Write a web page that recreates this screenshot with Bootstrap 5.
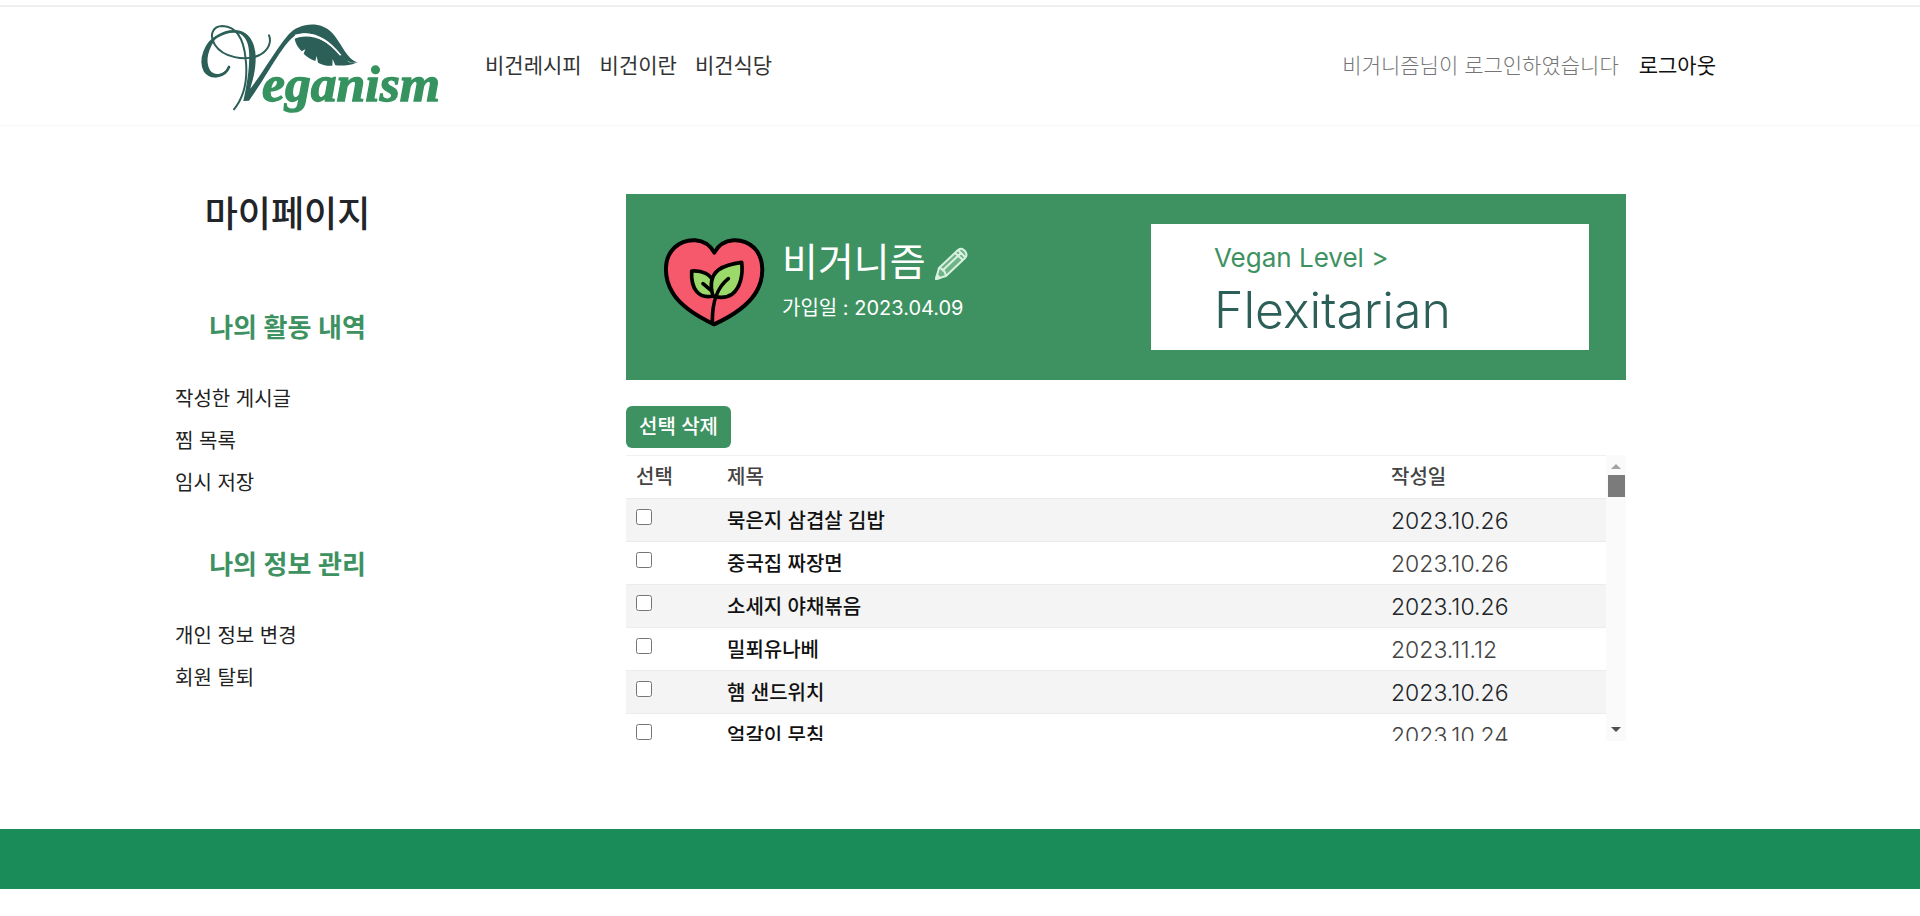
<!DOCTYPE html>
<html lang="ko">
<head>
<meta charset="utf-8">
<meta name="viewport" content="width=device-width, initial-scale=1">
<title>Veganism - 마이페이지</title>
<link rel="stylesheet" href="https://cdn.jsdelivr.net/npm/bootstrap@5.3.0/dist/css/bootstrap.min.css">
<style>
  :root { --leaf: #3e9261; --deep: #2c5f58; }
  body { font-family: Inter, "Noto Sans CJK KR", sans-serif; font-size: 20px; line-height: 30px; color: #212529; background: #fff; }
  .site-header { margin-top: 5px; border-top: 2px solid #efefef; border-bottom: 1px solid #f8f8f8; }
  .header-inner { max-width: 1520px; }
  .site-header .navbar { min-height: 118px; font-size: 21px; --bs-navbar-nav-link-padding-x: 9px; }
  .site-header .navbar-brand { margin-right: 36px; }
  .site-header .nav-link { color: #333; }
  .site-header .logout-link { color: #111; padding-left: 10px; }
  .greeting { color: #757575; font-weight: 300; padding-inline: 10px; }
  .mypage { max-width: 1570px; display: grid; grid-template-columns: 225px minmax(0, 1000px); column-gap: 226px; padding-top: 68px; min-height: 703px; }
  .side-title { font-size: 36px; line-height: 40px; font-weight: 500; margin-bottom: 76px; }
  .side-group { font-size: 26px; line-height: 36px; font-weight: 600; color: var(--leaf); margin-bottom: 32px; }
  .side-list { margin-bottom: 43px; }
  .side-list a { display: block; line-height: 42px; color: #222; text-decoration: none; }
  .profile { background: var(--leaf); color: #fff; min-height: 186px; padding: 30px 37px; }
  .profile-name { font-size: 39px; line-height: 60px; }
  .joined { line-height: 32px; }
  .level-box { width: 438px; height: 126px; padding: 17px 63px; color: var(--leaf); text-decoration: none; }
  .level-label { font-size: 26px; line-height: 34px; }
  .level-name { font-size: 50px; line-height: 70px; font-weight: 300; color: var(--deep); }
  .btn-remove { --bs-btn-bg: var(--leaf); --bs-btn-color: #fff; --bs-btn-hover-bg: #35804f; --bs-btn-hover-color: #fff; --bs-btn-padding-x: 12px; --bs-btn-padding-y: 5px; --bs-btn-font-size: 20px; --bs-btn-font-weight: 500; --bs-btn-line-height: 30px; margin: 26px 0 7px; }
  .post-scroll { height: 286px; }
  .post-view { overflow: hidden; }
  .posts { table-layout: fixed; --bs-table-striped-bg: #f4f4f4; border-color: #ececec; border-top: 1px solid #f0f0f0; }
  .posts th, .posts td { padding: 7px 10px 5px; line-height: 30px; height: 43px; vertical-align: top; }
  .posts thead th { padding-block: 6px; font-weight: 500; color: #444; }
  .posts tbody th { font-weight: 500; }
  .posts tbody a { color: #111; text-decoration: none; }
  .posts .date { font-size: 23px; font-weight: 300; color: #444; }
  .posts input { display: block; width: 16px; height: 16px; margin: 3px 0 0; }
  .pick-col { width: 91px; }
  .date-col { width: 225px; }
  .rail { width: 20px; background: #fafafa; }
  .rail .thumb { width: 17px; height: 22px; margin-top: 6px; background: #7b7b7b; }
  .site-footer { height: 60px; background: #198c5a; }
</style>
</head>
<body>
<header class="site-header">
  <nav class="navbar navbar-expand p-0 header-inner mx-auto">
    <a class="navbar-brand p-0" href="#" aria-label="Veganism">
      <svg class="d-block overflow-visible" width="240" height="92" viewBox="60 60 720 276">
        <g fill="none" stroke="#2c5f58" stroke-linecap="round">
          <path d="M147 201C135 232 92 238 75 213C57 180 77 128 112 109C145 89 181 89 201 109" stroke-width="8"/>
          <path d="M162 328C199 282 203 230 197 177C192 125 175 80 128 78C98 78 86 106 105 135C128 171 195 186 239 165C266 150 275 126 267 106" stroke-width="6"/>
        </g>
        <g fill="#2c5f58">
          <path d="M75 213C58 184 76 132 111 110C85 145 74 181 90 211C105 231 132 222 147 201C134 237 89 241 75 213Z"/>
          <path d="M163 94C204 90 225 123 227 169C228 211 217 245 211 266C248 219 285 151 325 104C357 68 421 61 456 98C486 130 499 178 534 187C509 191 493 181 478 160C449 118 395 87 348 105C310 127 265 222 207 302L190 303C202 249 210 196 207 154C205 122 192 102 163 94Z"/>
          <path d="M344 116C390 98 445 120 483 166L507 187L529 188C507 197 487 198 466 196L458 177L457 197C442 199 426 194 414 188L410 168L406 183C393 178 380 171 371 161L376 148L365 154C353 142 346 129 344 116Z"/>
        </g>
        <path d="M345 107C402 91 448 125 482 166" fill="none" stroke="#fff" stroke-width="5"/>
        <text x="246" y="304" font-family="Liberation Serif, serif" font-size="155" font-weight="700" font-style="italic" fill="#36935f" stroke="#36935f" stroke-width="4">eganism</text>
      </svg>
    </a>
    <ul class="navbar-nav">
      <li class="nav-item"><a class="nav-link" href="#">비건레시피</a></li>
      <li class="nav-item"><a class="nav-link" href="#">비건이란</a></li>
      <li class="nav-item"><a class="nav-link" href="#">비건식당</a></li>
    </ul>
    <div class="d-flex align-items-center ms-auto">
      <span class="greeting">비거니즘님이 로그인하였습니다</span>
      <a class="nav-link logout-link pe-1" href="#">로그아웃</a>
    </div>
  </nav>
</header>

<main class="mypage mx-auto">
  <aside>
    <h1 class="side-title text-center">마이페이지</h1>
    <h2 class="side-group text-center">나의 활동 내역</h2>
    <ul class="side-list list-unstyled">
      <li><a href="#">작성한 게시글</a></li>
      <li><a href="#">찜 목록</a></li>
      <li><a href="#">임시 저장</a></li>
    </ul>
    <h2 class="side-group text-center">나의 정보 관리</h2>
    <ul class="side-list list-unstyled">
      <li><a href="#">개인 정보 변경</a></li>
      <li><a href="#">회원 탈퇴</a></li>
    </ul>
  </aside>

  <section>
    <div class="profile d-flex justify-content-between">
      <div class="d-flex pt-2">
        <svg class="mt-1 me-3" width="103" height="92" viewBox="158 164 309 276" aria-hidden="true">
          <path d="M312 214C286 166 226 168 192 199C159 230 160 289 186 333C211 376 264 407 311 429C359 407 410 377 437 333C463 289 463 231 431 199C397 168 338 166 312 214Z" fill="#f5596b" stroke="#000" stroke-width="12" stroke-linejoin="round"/>
          <g fill="#9bd96b" stroke="#000" stroke-width="11" stroke-linejoin="round" stroke-linecap="round">
            <path d="M244 269C275 267 303 278 310 304L308 344C265 353 241 323 244 269Z"/>
            <path d="M394 243C399 282 389 319 366 338C349 350 327 350 308 344C299 313 300 284 325 265C345 251 370 246 394 243Z"/>
            <path d="M354 292C321 318 305 357 306 425M278 307L303 328" fill="none"/>
          </g>
        </svg>
        <div>
          <div class="d-flex align-items-center">
            <span class="profile-name">비거니즘</span>
            <button class="btn p-0 border-0 ms-2 mt-1" type="button" aria-label="이름 수정">
              <svg class="d-block" width="34" height="34" viewBox="0 0 34 34" fill="none" stroke="#d9f2df" stroke-width="2" stroke-linejoin="round">
                <path d="M2 32L5 21L24 3Q27 0 31 4Q34 8 31 11L12 29Z" fill="#6fb389"/>
                <path d="M5 21Q11 22 12 29M8 24L27 6M21 6L29 13M24 3L31 10"/>
                <path d="M2 32L3 28L6 31Z" fill="#d9f2df"/>
              </svg>
            </button>
          </div>
          <div class="joined">가입일 : 2023.04.09</div>
        </div>
      </div>
      <a class="level-box bg-white d-block" href="#">
        <div class="level-label">Vegan Level &gt;</div>
        <div class="level-name">Flexitarian</div>
      </a>
    </div>

    <button class="btn btn-remove" type="button">선택 삭제</button>

    <div class="post-scroll d-flex">
      <div class="post-view flex-grow-1">
        <table class="table table-striped posts mb-0">
          <colgroup><col class="pick-col"><col><col class="date-col"></colgroup>
          <thead>
            <tr><th scope="col">선택</th><th scope="col">제목</th><th scope="col">작성일</th></tr>
          </thead>
          <tbody>
            <tr><td><input type="checkbox" aria-label="묵은지 삼겹살 김밥"></td><th scope="row"><a href="#">묵은지 삼겹살 김밥</a></th><td class="date">2023.10.26</td></tr>
            <tr><td><input type="checkbox" aria-label="중국집 짜장면"></td><th scope="row"><a href="#">중국집 짜장면</a></th><td class="date">2023.10.26</td></tr>
            <tr><td><input type="checkbox" aria-label="소세지 야채볶음"></td><th scope="row"><a href="#">소세지 야채볶음</a></th><td class="date">2023.10.26</td></tr>
            <tr><td><input type="checkbox" aria-label="밀푀유나베"></td><th scope="row"><a href="#">밀푀유나베</a></th><td class="date">2023.11.12</td></tr>
            <tr><td><input type="checkbox" aria-label="햄 샌드위치"></td><th scope="row"><a href="#">햄 샌드위치</a></th><td class="date">2023.10.26</td></tr>
            <tr><td><input type="checkbox" aria-label="얼갈이 무침"></td><th scope="row"><a href="#">얼갈이 무침</a></th><td class="date">2023.10.24</td></tr>
          </tbody>
        </table>
      </div>
      <div class="rail d-flex flex-column align-items-center flex-shrink-0 py-2" aria-hidden="true">
        <svg width="10" height="6" viewBox="0 0 10 6"><path d="M0 6L5 1L10 6Z" fill="#a3a3a3"/></svg>
        <div class="thumb"></div>
        <svg class="mt-auto" width="10" height="6" viewBox="0 0 10 6"><path d="M0 0L5 5L10 0Z" fill="#505050"/></svg>
      </div>
    </div>
  </section>
</main>

<footer class="site-footer"></footer>
<script src="https://cdn.jsdelivr.net/npm/bootstrap@5.3.0/dist/js/bootstrap.bundle.min.js"></script>
</body>
</html>
